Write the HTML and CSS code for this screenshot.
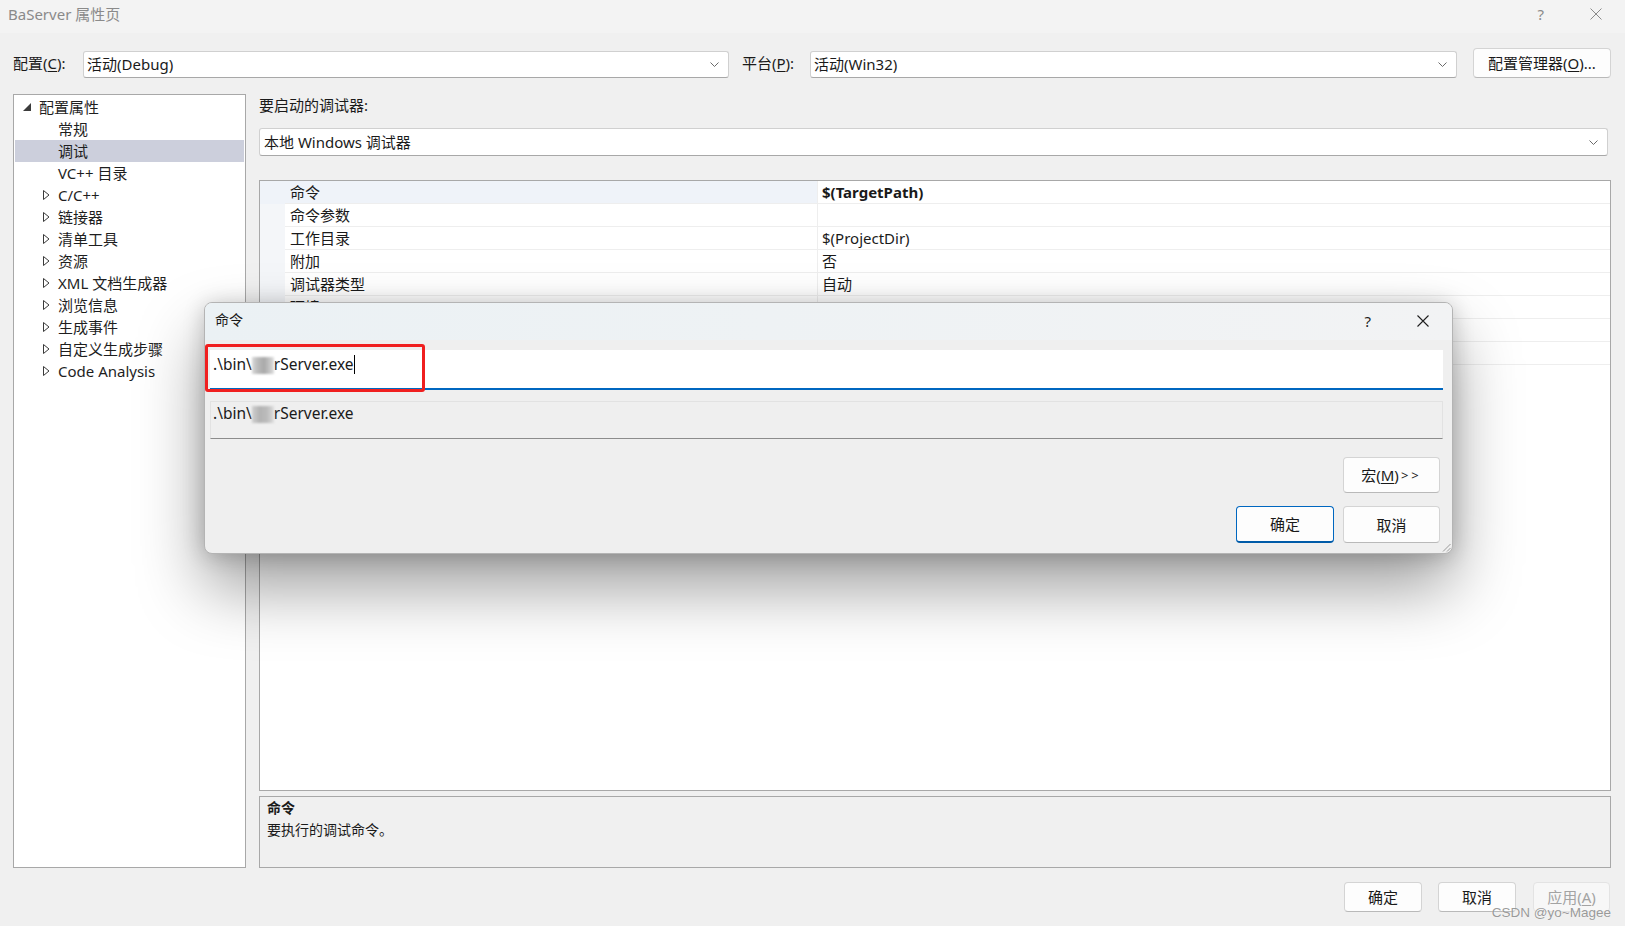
FILE: index.html
```html
<!DOCTYPE html>
<html lang="zh-CN">
<head>
<meta charset="utf-8">
<title>BaServer 属性页</title>
<link rel="stylesheet" href="styles.css">
</head>
<body>
<div class="window">
  <div class="titlebar">
    <span class="title">BaServer 属性页</span>
    <div class="title-ctrls main-ctrls">
      <span class="help">?</span>
      <svg class="close" width="12" height="12" viewBox="0 0 12 12"><path d="M0.5 0.5 L11.5 11.5 M11.5 0.5 L0.5 11.5" stroke="#8a8a8a" stroke-width="1" fill="none"/></svg>
    </div>
  </div>

  <div class="config-row">
    <span class="lbl lbl-config">配置(<u>C</u>):</span>
    <div class="combo combo-config"><span class="combo-text">活动(Debug)</span><svg class="chev" width="9" height="5" viewBox="0 0 9 5"><path d="M0.5 0.5 L4.5 4.5 L8.5 0.5" stroke="#6a6a6a" fill="none"/></svg></div>
    <span class="lbl lbl-platform">平台(<u>P</u>):</span>
    <div class="combo combo-platform"><span class="combo-text">活动(Win32)</span><svg class="chev" width="9" height="5" viewBox="0 0 9 5"><path d="M0.5 0.5 L4.5 4.5 L8.5 0.5" stroke="#6a6a6a" fill="none"/></svg></div>
    <button class="btn btn-cfgmgr">配置管理器(<u>O</u>)...</button>
  </div>

  <div class="main">
    <div class="tree">
      <div class="tree-item root"><svg class="tri-open" width="8" height="8" viewBox="0 0 8 8"><polygon points="8,0 8,8 0,8" fill="#3c3c3c"/></svg><span>配置属性</span></div>
      <div class="tree-item leaf">常规</div>
      <div class="tree-item leaf selected">调试</div>
      <div class="tree-item leaf">VC++ 目录</div>
      <div class="tree-item node"><svg class="tri" width="7" height="10" viewBox="0 0 7 10"><polygon points="0.5,0.5 6,5 0.5,9.5" fill="none" stroke="#3a3a3a"/></svg><span>C/C++</span></div>
      <div class="tree-item node"><svg class="tri" width="7" height="10" viewBox="0 0 7 10"><polygon points="0.5,0.5 6,5 0.5,9.5" fill="none" stroke="#3a3a3a"/></svg><span>链接器</span></div>
      <div class="tree-item node"><svg class="tri" width="7" height="10" viewBox="0 0 7 10"><polygon points="0.5,0.5 6,5 0.5,9.5" fill="none" stroke="#3a3a3a"/></svg><span>清单工具</span></div>
      <div class="tree-item node"><svg class="tri" width="7" height="10" viewBox="0 0 7 10"><polygon points="0.5,0.5 6,5 0.5,9.5" fill="none" stroke="#3a3a3a"/></svg><span>资源</span></div>
      <div class="tree-item node"><svg class="tri" width="7" height="10" viewBox="0 0 7 10"><polygon points="0.5,0.5 6,5 0.5,9.5" fill="none" stroke="#3a3a3a"/></svg><span>XML 文档生成器</span></div>
      <div class="tree-item node"><svg class="tri" width="7" height="10" viewBox="0 0 7 10"><polygon points="0.5,0.5 6,5 0.5,9.5" fill="none" stroke="#3a3a3a"/></svg><span>浏览信息</span></div>
      <div class="tree-item node"><svg class="tri" width="7" height="10" viewBox="0 0 7 10"><polygon points="0.5,0.5 6,5 0.5,9.5" fill="none" stroke="#3a3a3a"/></svg><span>生成事件</span></div>
      <div class="tree-item node"><svg class="tri" width="7" height="10" viewBox="0 0 7 10"><polygon points="0.5,0.5 6,5 0.5,9.5" fill="none" stroke="#3a3a3a"/></svg><span>自定义生成步骤</span></div>
      <div class="tree-item node"><svg class="tri" width="7" height="10" viewBox="0 0 7 10"><polygon points="0.5,0.5 6,5 0.5,9.5" fill="none" stroke="#3a3a3a"/></svg><span>Code Analysis</span></div>
    </div>

    <div class="right">
      <div class="dbg-label">要启动的调试器:</div>
      <div class="combo combo-dbg"><span class="combo-text">本地 Windows 调试器</span><svg class="chev" width="9" height="5" viewBox="0 0 9 5"><path d="M0.5 0.5 L4.5 4.5 L8.5 0.5" stroke="#6a6a6a" fill="none"/></svg></div>
      <div class="grid">
        <div class="row sel"><div class="gutter"></div><div class="name">命令</div><div class="value bold">$(TargetPath)</div></div>
        <div class="row"><div class="gutter"></div><div class="name">命令参数</div><div class="value"></div></div>
        <div class="row"><div class="gutter"></div><div class="name">工作目录</div><div class="value">$(ProjectDir)</div></div>
        <div class="row"><div class="gutter"></div><div class="name">附加</div><div class="value">否</div></div>
        <div class="row"><div class="gutter"></div><div class="name">调试器类型</div><div class="value">自动</div></div>
        <div class="row"><div class="gutter"></div><div class="name">环境</div><div class="value"></div></div>
        <div class="row"><div class="gutter"></div><div class="name"></div><div class="value"></div></div>
        <div class="row"><div class="gutter"></div><div class="name"></div><div class="value"></div></div>
      </div>
      <div class="desc">
        <div class="desc-title">命令</div>
        <div class="desc-text">要执行的调试命令。</div>
      </div>
    </div>
  </div>

  <div class="footer">
    <button class="btn btn-foot">确定</button>
    <button class="btn btn-foot">取消</button>
    <button class="btn btn-foot disabled">应用(<u>A</u>)</button>
  </div>

  <div class="dialog">
    <div class="dlg-title">
      <span class="dlg-caption">命令</span>
      <div class="title-ctrls dlg-ctrls">
        <span class="help">?</span>
        <svg class="close" width="12" height="12" viewBox="0 0 12 12"><path d="M0.5 0.5 L11.5 11.5 M11.5 0.5 L0.5 11.5" stroke="#1f1f1f" stroke-width="1.1" fill="none"/></svg>
      </div>
    </div>
    <div class="dlg-body">
      <div class="dlg-input">.\bin\<span class="blur"></span>rServer.exe<span class="caret"></span></div>
      <div class="dlg-eval">.\bin\<span class="blur blur2"></span>rServer.exe</div>
      <div class="dlg-btnrow first"><button class="btn dlg-btn">宏(<u>M</u>)<span class="gt">&gt;&gt;</span></button></div>
      <div class="dlg-btnrow"><button class="btn dlg-btn default">确定</button><button class="btn dlg-btn">取消</button></div>
    </div>
    <svg class="grip" width="9" height="9" viewBox="0 0 9 9"><path d="M8.5 1 L1 8.5 M8.5 5 L5 8.5" stroke="#9a9a9a" fill="none"/></svg>
  </div>

  <div class="annotation"></div>
  <div class="watermark">CSDN @yo~Magee</div>
</div>
</body>
</html>
```

FILE: styles.css
```css
* { box-sizing: border-box; }

html, body {
  margin: 0;
  padding: 0;
}

body {
  background: #f0f0f0;
  font-family: "Noto Sans", "Noto Sans CJK SC", sans-serif;
  font-size: 15px;
  color: #1a1a1a;
}

u { text-decoration: underline; text-underline-offset: 2px; }

.window {
  position: relative;
  width: 1625px;
  height: 926px;
  overflow: hidden;
  background: #f0f0f0;
}

/* Title bar */
.titlebar {
  height: 33px;
  background: #f3f3f3;
  display: flex;
  align-items: center;
  justify-content: space-between;
  padding: 0 23px 0 8px;
}

.title {
  color: #8a8a8a;
  font-size: 15px;
  line-height: 20px;
  margin-top: -5px;
}

.title-ctrls {
  display: flex;
  align-items: center;
  gap: 46px;
}

.main-ctrls { margin-top: -6px; }

.title-ctrls .help {
  color: #8a8a8a;
  font-size: 15px;
  line-height: 16px;
}

/* Config row */
.config-row {
  display: flex;
  align-items: flex-start;
  height: 30px;
  margin-top: 15px;
  padding: 0 14px 0 13px;
}

.lbl {
  line-height: 30px;
  height: 30px;
  white-space: nowrap;
}

.lbl-config { width: 70px; }
.lbl-platform { width: 68px; margin-left: 13px; }

.combo {
  display: flex;
  align-items: center;
  justify-content: space-between;
  background: #fff;
  border: 1px solid #d0d0d0;
  border-bottom-color: #a8a8a8;
  border-radius: 3px;
  padding: 0 9px 0 3px;
}

.combo-text { line-height: 20px; white-space: nowrap; margin-top: -1px; }

.combo-config { width: 646px; height: 27px; margin-top: 3px; }
.combo-platform { width: 647px; height: 27px; margin-top: 3px; }

.btn {
  font-family: "Noto Sans", "Noto Sans CJK SC", sans-serif;
  font-size: 15px;
  color: #1a1a1a;
  background: #fdfdfd;
  border: 1px solid #d4d4d4;
  border-bottom-color: #b9b9b9;
  border-radius: 4px;
  padding: 0;
  line-height: 20px;
  display: flex;
  align-items: center;
  justify-content: center;
  white-space: nowrap;
}

.btn-cfgmgr { width: 138px; height: 30px; margin-left: 16px; }

/* Main area */
.main {
  display: flex;
  height: 774px;
  margin-top: 16px;
  padding-left: 13px;
  gap: 13px;
}

.tree {
  width: 233px;
  height: 774px;
  background: #fff;
  border: 1px solid #a8a8a8;
  padding-top: 1px;
}

.tree-item {
  height: 22px;
  line-height: 22px;
  display: flex;
  align-items: center;
  white-space: nowrap;
  color: #1e1e1e;
}

.tree-item.root { padding-left: 9px; gap: 8px; }
.tree-item.leaf { padding-left: 44px; }
.tree-item.node { padding-left: 29px; gap: 8px; }

.tree-item.selected {
  background: #cccfdc;
  margin: 0 1px;
  padding-left: 43px;
}

.right {
  width: 1352px;
  display: flex;
  flex-direction: column;
}

.dbg-label {
  height: 22px;
  line-height: 22px;
}

.combo-dbg {
  margin-top: 12px;
  width: 1349px;
  height: 28px;
  padding-left: 4px;
}

.grid {
  margin-top: 24px;
  height: 611px;
  background: #fff;
  border: 1px solid #a8a8a8;
}

.row {
  display: grid;
  grid-template-columns: 25px 533px 1fr;
  height: 23px;
}

.gutter { background: #f4f6f9; }

.name, .value {
  height: 23px;
  line-height: 22px;
  border-bottom: 1px solid #eeeeee;
  white-space: nowrap;
  overflow: hidden;
}

.name { padding-left: 5px; border-right: 1px solid #eeeeee; }
.value { padding-left: 4px; }
.value.bold { font-weight: 700; }

.row.sel .gutter, .row.sel .name { background: #eff3f9; }

.desc {
  margin-top: 5px;
  height: 72px;
  border: 1px solid #a8a8a8;
  background: #f0f0f0;
  padding: 0 7px;
  font-size: 14px;
  line-height: 22px;
}

.desc-title { font-weight: 700; }

/* Footer */
.footer {
  display: flex;
  justify-content: flex-end;
  margin-top: 14px;
  padding-right: 15px;
  gap: 16px;
}

.btn-foot { width: 78px; height: 30px; }
.btn-foot.disabled {
  width: 77px;
  color: #a3a3a3;
  background: #f7f7f7;
  border-color: #e3e3e3;
  margin-left: 1px;
}

/* Dialog */
.dialog {
  position: absolute;
  left: 204px;
  top: 302px;
  width: 1249px;
  height: 252px;
  background: #efefef;
  border: 1px solid #b4b4b4;
  border-radius: 8px;
  box-shadow: 0 34px 66px rgba(0, 0, 0, 0.38), 0 2px 21px rgba(0, 0, 0, 0.2);
  overflow: hidden;
}

.dlg-title {
  height: 37px;
  display: flex;
  align-items: center;
  justify-content: space-between;
  padding: 0 23px 0 10px;
  background: linear-gradient(90deg, #ebf1f4 0%, #eef2f4 45%, #f2f3f4 100%);
}

.dlg-caption { font-size: 14px; line-height: 20px; margin-top: -3px; }

.dlg-ctrls { margin-top: -2px; }
.dlg-ctrls .help { color: #1f1f1f; font-size: 15px; }

.dlg-body {
  padding: 10px 9px 10px 5px;
}

.dlg-input {
  height: 40px;
  background: #fff;
  border-bottom: 2px solid #0067c0;
  padding: 3px 0 0 3px;
  font-size: 15.5px;
  line-height: 22px;
  white-space: nowrap;
  display: flex;
  align-items: flex-start;
}

.blur {
  display: inline-block;
  width: 22px;
  height: 17px;
  margin-top: 4px;
  background: linear-gradient(90deg, #d9d9d9 0%, #bcbcbc 25%, #a9a9a9 55%, #c4c4c4 80%, #e0e0e0 100%);
  filter: blur(0.8px);
}

.blur2 {
  background: linear-gradient(90deg, #cfcfcf 0%, #b3b3b3 35%, #bdbdbd 70%, #dedede 100%);
}

.caret {
  display: inline-block;
  width: 1px;
  height: 19px;
  margin-top: 2px;
  background: #000;
}

.dlg-eval {
  margin-top: 11px;
  height: 38px;
  background: #efefef;
  border: 1px solid #e2e2e2;
  border-bottom-color: #8c8c8c;
  padding: 0 0 0 2px;
  font-size: 15.5px;
  line-height: 22px;
  white-space: nowrap;
  display: flex;
  align-items: flex-start;
}

.dlg-btnrow {
  display: flex;
  justify-content: flex-end;
  gap: 9px;
  margin-top: 13px;
  padding-right: 3px;
}

.dlg-btnrow.first { margin-top: 18px; }

.dlg-btn { width: 97px; height: 37px; }
.dlg-btnrow.first .dlg-btn { height: 36px; }

.gt { letter-spacing: 3px; margin-left: 2px; font-size: 13px; }

.dlg-btn.default {
  width: 98px;
  border: 1px solid #0067c0;
  border-bottom: 2px solid #005ba8;
}

.grip {
  position: absolute;
  right: 1px;
  bottom: 1px;
}

/* Red annotation box */
.annotation {
  position: absolute;
  left: 205px;
  top: 344px;
  width: 220px;
  height: 48px;
  border: 3px solid #f01f1f;
  border-radius: 3px;
}

.watermark {
  position: absolute;
  right: 14px;
  bottom: 6px;
  font-family: "Liberation Sans", sans-serif;
  font-size: 13.5px;
  color: rgba(110, 110, 110, 0.7);
  text-shadow: 0 0 1px rgba(255, 255, 255, 0.8);
  white-space: nowrap;
}
```
